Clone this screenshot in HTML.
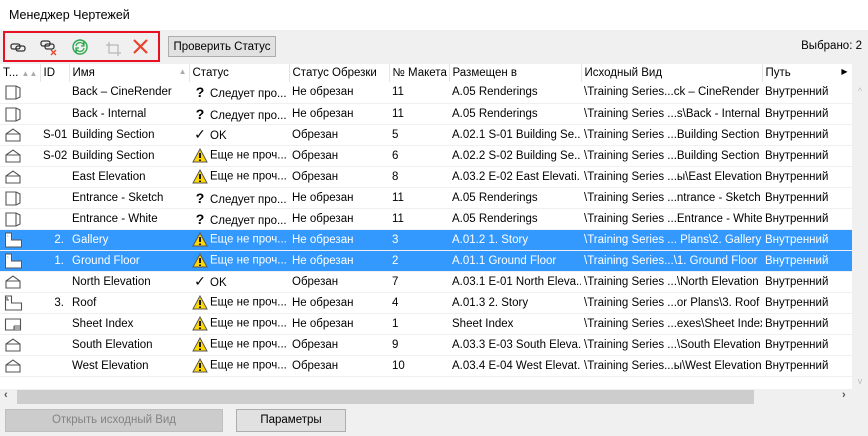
<!DOCTYPE html>
<html><head><meta charset="utf-8"><style>
*{margin:0;padding:0;box-sizing:border-box}
body{width:868px;height:436px;background:#f0f0f0;font-family:"Liberation Sans","DejaVu Sans",sans-serif;font-size:11.5px;color:#000;position:relative;overflow:hidden}
.abs{position:absolute}
.title{left:0;top:0;width:868px;height:30px;background:#fff;padding:8px 0 0 9px;font-size:12.5px}
.red{left:3px;top:31px;width:157px;height:31px;border:2px solid #e81123}
.btn{border:1px solid #adadad;background:#e1e1e1;text-align:center;line-height:20px}
.tbl{left:0;top:64px;width:852px;height:325px;background:#fff}
table{border-collapse:collapse;table-layout:fixed;width:852px}
td{height:21px;white-space:nowrap;overflow:hidden;padding-left:3px;border-bottom:1px solid #f0f0f0}
tr.h td{height:18px;border-right:1px solid #e5e5e5;border-bottom:none}
tr.s td{background:#3399ff;color:#fff}
td.id{text-align:right;padding-right:5px}
td.i{padding-left:4px}
.ic{display:inline-block;width:16px;text-align:center;font-weight:bold;margin-right:2px;font-size:14px}
svg{vertical-align:middle}
.w{display:inline-block;width:16px;height:15px;margin-right:2px;vertical-align:middle}
</style></head><body>
<svg width="0" height="0" style="position:absolute"><defs>
<symbol id="v" viewBox="0 0 18 18"><path d="M2 3h10l4 2v9l-4 2H2zM12 3v13" fill="none" stroke="#555" stroke-width="1.1"/></symbol>
<symbol id="e" viewBox="0 0 18 18"><path d="M2 8l7-5 7 5v7H2zM2 8h14" fill="none" stroke="#555" stroke-width="1.1"/></symbol>
<symbol id="p" viewBox="0 0 20 18"><path d="M1.5 2h6v7h10v7h-16zM3 3v3h2" fill="none" stroke="#555" stroke-width="1.1"/></symbol>
<symbol id="ps" viewBox="0 0 20 18"><path d="M1.5 2h6v7h10v7h-16zM3 3v3h2" fill="#fff" stroke="#fff" stroke-width="1.1"/><path d="M1.5 2h6v7h10v7h-16z" fill="none" stroke="#555" stroke-width="1"/></symbol>
<symbol id="sh" viewBox="0 0 18 18"><path d="M1.5 4h15v11h-15zM10 11h6.5M10 13h6.5M10 11v4" fill="none" stroke="#555" stroke-width="1.1"/></symbol>
<symbol id="wn" viewBox="0 0 16 15"><path d="M8 1L15 14H1z" fill="#ffd800" stroke="#555" stroke-width="1"/><path d="M8 5v5M8 11.5v1.5" stroke="#000" stroke-width="1.8"/></symbol>
</defs></svg>
<div class="abs title">Менеджер Чертежей</div>
<div class="abs red"></div>
<svg class="abs" style="left:9px;top:38px" width="145" height="18" viewBox="0 0 145 18">
<g fill="none" stroke="#333" stroke-width="1.3"><rect x="2" y="6" width="9" height="5" rx="2"/><rect x="7" y="8" width="9" height="5" rx="2"/></g>
<g fill="none" stroke="#333" stroke-width="1.3"><rect x="32" y="3" width="9" height="5" rx="2"/><rect x="36" y="6" width="9" height="5" rx="2"/></g>
<path d="M42 12l5 5M47 12l-5 5" stroke="#e8422a" stroke-width="1.3"/>
<circle cx="71" cy="9" r="7" fill="none" stroke="#2aa84a" stroke-width="1.4"/>
<path d="M67 8a4 4 0 0 1 7-2l1-2v4h-3M75 10a4 4 0 0 1-7 2l-1 2v-4h3" stroke="#2aa84a" stroke-width="1.2" fill="none"/>
<path d="M100 4v11h12M97 7h12v11" stroke="#aaa" stroke-width="1" fill="none"/>
<path d="M125 2l13 13M138 2l-13 13" stroke="#e8422a" stroke-width="2.2"/>
</svg>
<div class="abs btn" style="left:168px;top:36px;width:108px;height:21px">Проверить Статус</div>
<div class="abs" style="right:6px;top:40px">Выбрано: 2</div>
<div class="abs tbl">
<table>
<colgroup><col style="width:40px"><col style="width:29px"><col style="width:120px"><col style="width:100px"><col style="width:100px"><col style="width:60px"><col style="width:132px"><col style="width:181px"><col style="width:90px"></colgroup>
<tr class="h"><td>T... <span style="color:#aaa;font-size:8px">▲▲</span></td><td>ID</td><td>Имя <span style="float:right;color:#aaa;font-size:8px;margin-right:2px">▲</span></td><td>Статус</td><td>Статус Обрезки</td><td>№ Макета</td><td>Размещен в</td><td>Исходный Вид</td><td>Путь <span style="float:right;font-size:8px;margin-right:4px">▶</span></td></tr>
<tr><td class="i"><svg width="18" height="18"><use href="#v"/></svg></td><td class="id"></td><td>Back – CineRender</td><td><span class="ic">?</span>Следует про...</td><td>Не обрезан</td><td>11</td><td>A.05 Renderings</td><td>\Training Series...ck – CineRender</td><td>Внутренний</td></tr>
<tr><td class="i"><svg width="18" height="18"><use href="#v"/></svg></td><td class="id"></td><td>Back - Internal</td><td><span class="ic">?</span>Следует про...</td><td>Не обрезан</td><td>11</td><td>A.05 Renderings</td><td>\Training Series ...s\Back - Internal</td><td>Внутренний</td></tr>
<tr><td class="i"><svg width="18" height="18"><use href="#e"/></svg></td><td class="id">S-01</td><td>Building Section</td><td><span class="ic">✓</span>OK</td><td>Обрезан</td><td>5</td><td>A.02.1 S-01 Building Se...</td><td>\Training Series ...Building Section</td><td>Внутренний</td></tr>
<tr><td class="i"><svg width="18" height="18"><use href="#e"/></svg></td><td class="id">S-02</td><td>Building Section</td><td><svg class="w"><use href="#wn"/></svg>Еще не проч...</td><td>Обрезан</td><td>6</td><td>A.02.2 S-02 Building Se...</td><td>\Training Series ...Building Section</td><td>Внутренний</td></tr>
<tr><td class="i"><svg width="18" height="18"><use href="#e"/></svg></td><td class="id"></td><td>East Elevation</td><td><svg class="w"><use href="#wn"/></svg>Еще не проч...</td><td>Обрезан</td><td>8</td><td>A.03.2 E-02 East Elevati...</td><td>\Training Series ...ы\East Elevation</td><td>Внутренний</td></tr>
<tr><td class="i"><svg width="18" height="18"><use href="#v"/></svg></td><td class="id"></td><td>Entrance - Sketch</td><td><span class="ic">?</span>Следует про...</td><td>Не обрезан</td><td>11</td><td>A.05 Renderings</td><td>\Training Series ...ntrance - Sketch</td><td>Внутренний</td></tr>
<tr><td class="i"><svg width="18" height="18"><use href="#v"/></svg></td><td class="id"></td><td>Entrance - White</td><td><span class="ic">?</span>Следует про...</td><td>Не обрезан</td><td>11</td><td>A.05 Renderings</td><td>\Training Series ...Entrance - White</td><td>Внутренний</td></tr>
<tr class="s"><td class="i"><svg width="20" height="18"><use href="#ps"/></svg></td><td class="id">2.</td><td>Gallery</td><td><svg class="w"><use href="#wn"/></svg>Еще не проч...</td><td>Не обрезан</td><td>3</td><td>A.01.2 1. Story</td><td>\Training Series ... Plans\2. Gallery</td><td>Внутренний</td></tr>
<tr class="s"><td class="i"><svg width="20" height="18"><use href="#ps"/></svg></td><td class="id">1.</td><td>Ground Floor</td><td><svg class="w"><use href="#wn"/></svg>Еще не проч...</td><td>Не обрезан</td><td>2</td><td>A.01.1 Ground Floor</td><td>\Training Series...\1. Ground Floor</td><td>Внутренний</td></tr>
<tr><td class="i"><svg width="18" height="18"><use href="#e"/></svg></td><td class="id"></td><td>North Elevation</td><td><span class="ic">✓</span>OK</td><td>Обрезан</td><td>7</td><td>A.03.1 E-01 North Eleva...</td><td>\Training Series ...\North Elevation</td><td>Внутренний</td></tr>
<tr><td class="i"><svg width="20" height="18"><use href="#p"/></svg></td><td class="id">3.</td><td>Roof</td><td><svg class="w"><use href="#wn"/></svg>Еще не проч...</td><td>Не обрезан</td><td>4</td><td>A.01.3 2. Story</td><td>\Training Series ...or Plans\3. Roof</td><td>Внутренний</td></tr>
<tr><td class="i"><svg width="18" height="18"><use href="#sh"/></svg></td><td class="id"></td><td>Sheet Index</td><td><svg class="w"><use href="#wn"/></svg>Еще не проч...</td><td>Не обрезан</td><td>1</td><td>Sheet Index</td><td>\Training Series ...exes\Sheet Index</td><td>Внутренний</td></tr>
<tr><td class="i"><svg width="18" height="18"><use href="#e"/></svg></td><td class="id"></td><td>South Elevation</td><td><svg class="w"><use href="#wn"/></svg>Еще не проч...</td><td>Обрезан</td><td>9</td><td>A.03.3 E-03 South Eleva...</td><td>\Training Series ...\South Elevation</td><td>Внутренний</td></tr>
<tr><td class="i"><svg width="18" height="18"><use href="#e"/></svg></td><td class="id"></td><td>West Elevation</td><td><svg class="w"><use href="#wn"/></svg>Еще не проч...</td><td>Обрезан</td><td>10</td><td>A.03.4 E-04 West Elevat...</td><td>\Training Series...ы\West Elevation</td><td>Внутренний</td></tr>
</table>
</div>
<div class="abs" style="left:852px;top:64px;width:16px;height:325px;background:#f0f0f0;color:#bbb;font-size:9px;text-align:center"><div style="margin-top:22px">^</div><div style="margin-top:280px">v</div></div>
<div class="abs" style="left:0;top:389px;width:868px;height:16px;background:#f0f0f0"></div>
<div class="abs" style="left:17px;top:390px;width:737px;height:14px;background:#cdcdcd"></div>
<div class="abs" style="left:4px;top:389px;font-size:11px;font-weight:bold;color:#555">‹</div>
<div class="abs" style="left:842px;top:389px;font-size:11px;font-weight:bold;color:#555">›</div>
<div class="abs btn" style="left:5px;top:409px;width:218px;height:23px;background:#ccc;border-color:#bfbfbf;color:#838383;line-height:21px">Открыть исходный Вид</div>
<div class="abs btn" style="left:236px;top:409px;width:110px;height:23px;line-height:21px">Параметры</div>
</body></html>
